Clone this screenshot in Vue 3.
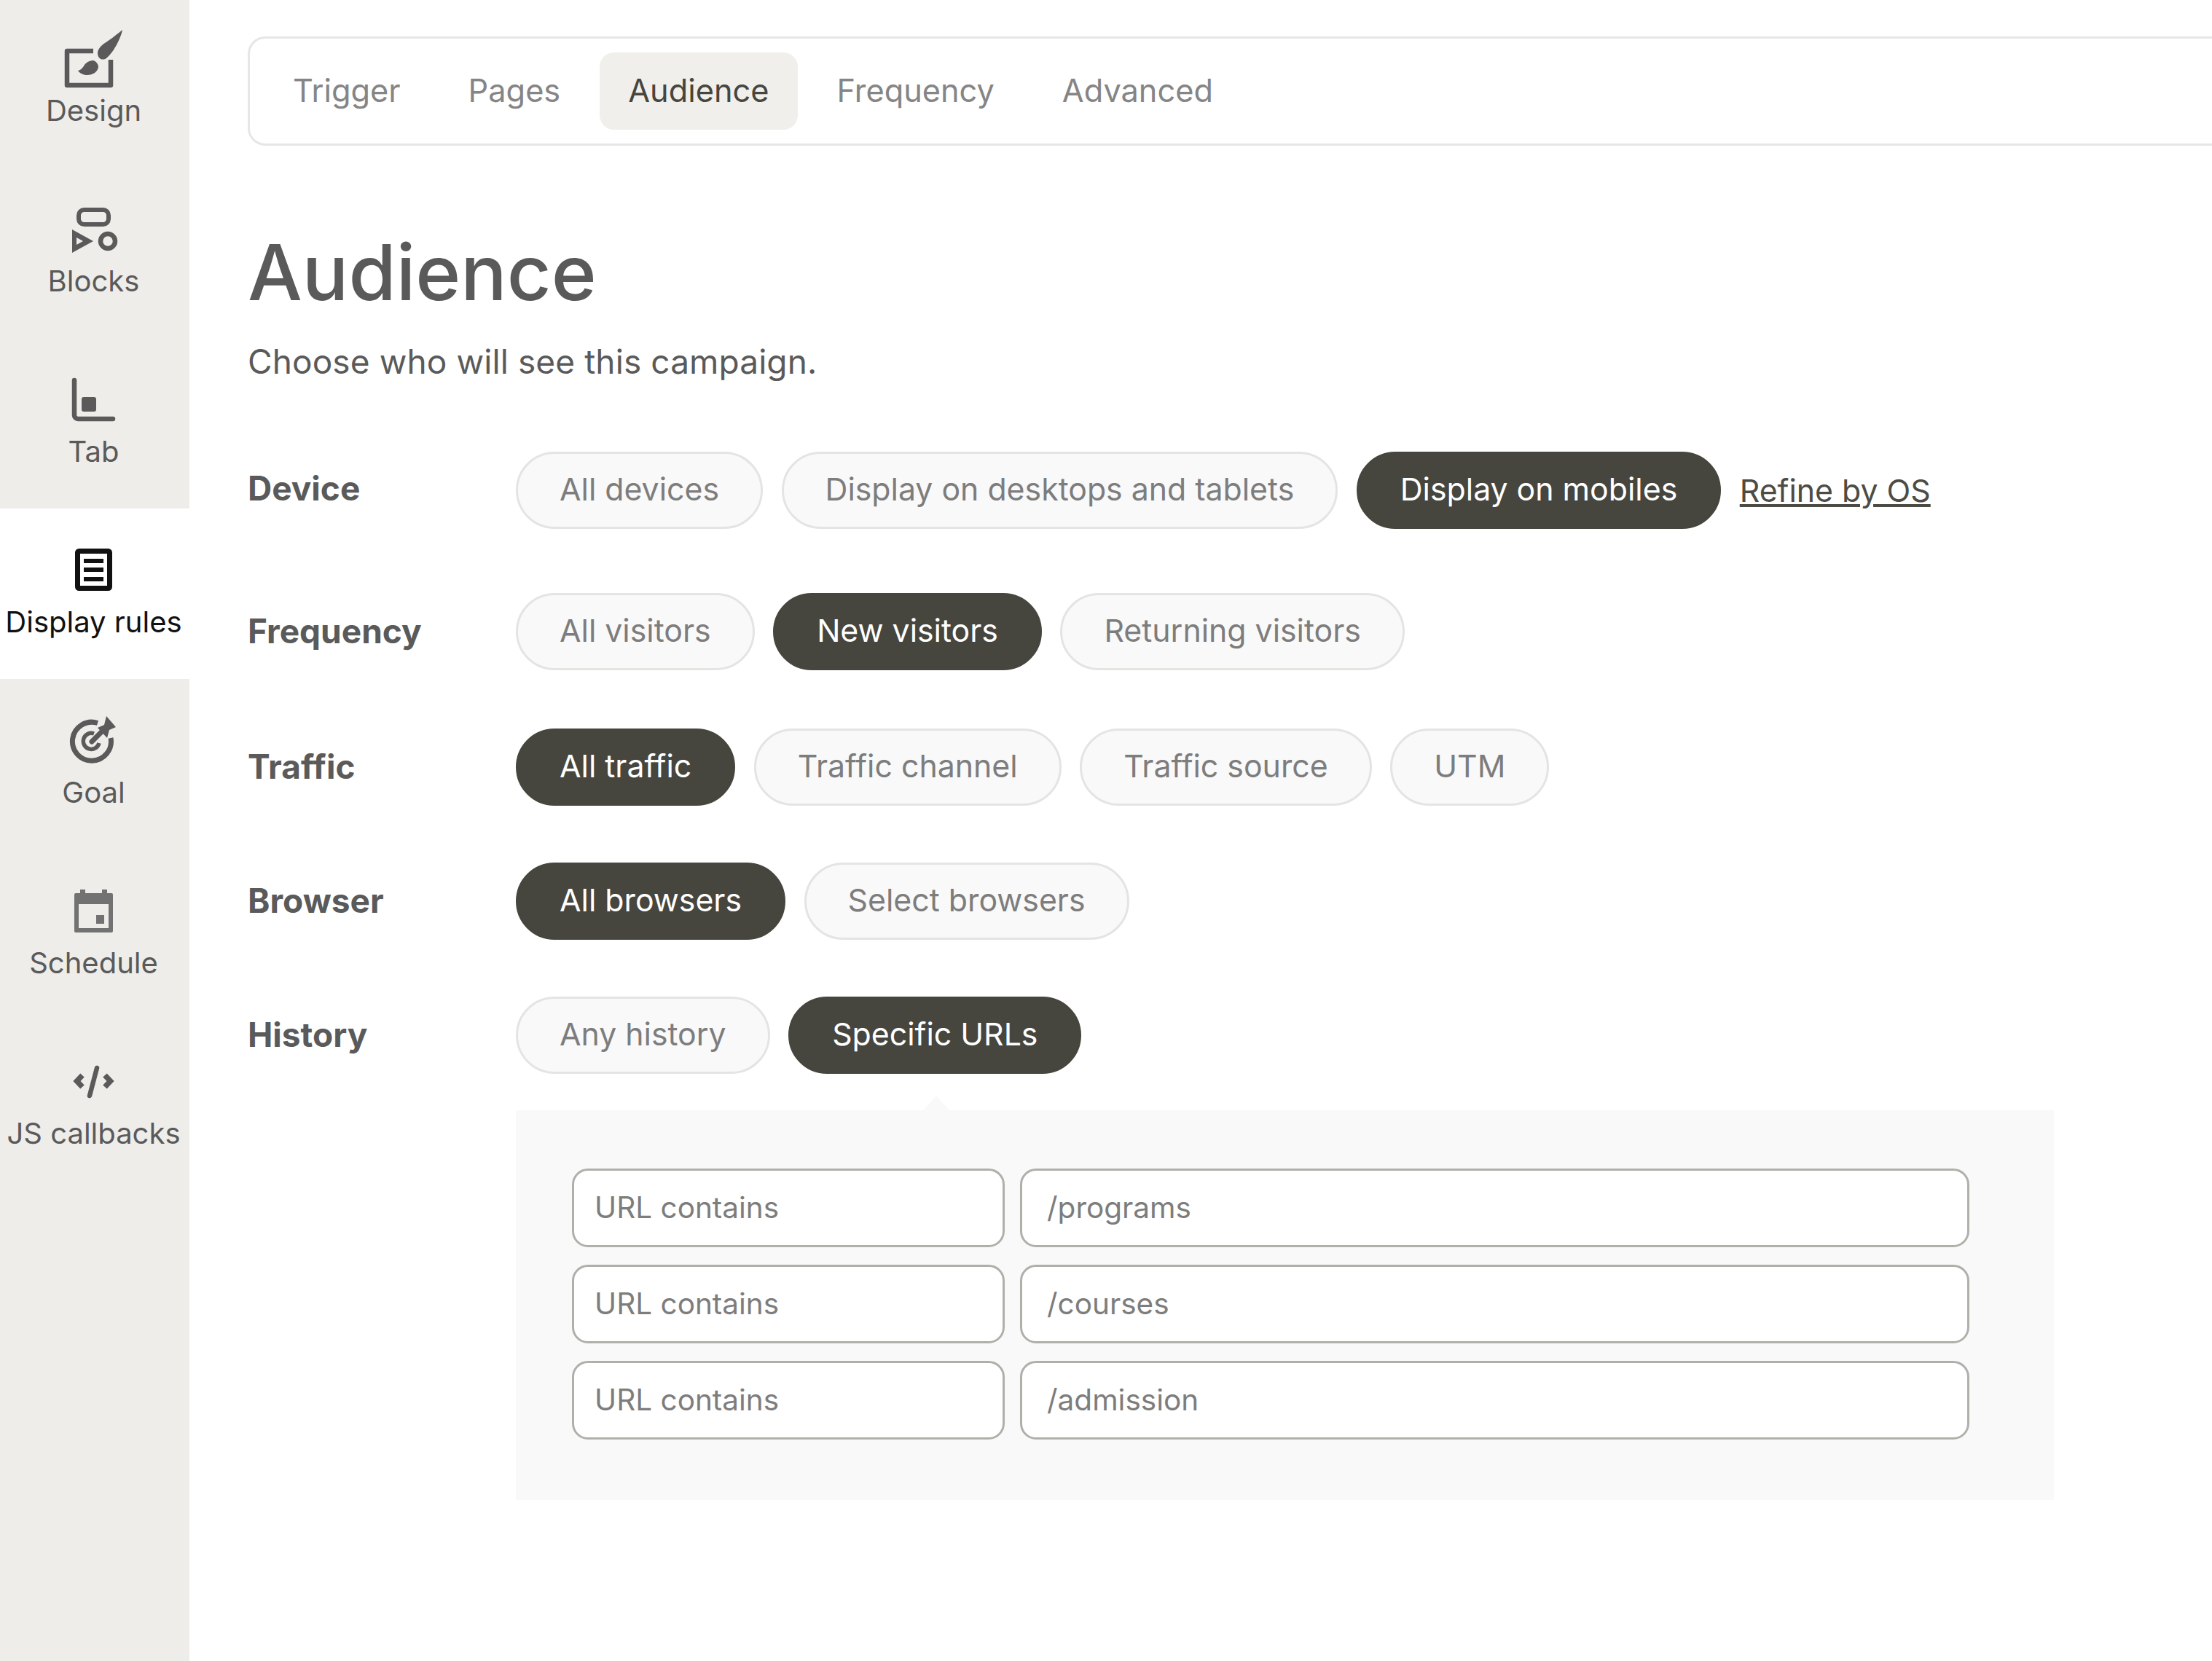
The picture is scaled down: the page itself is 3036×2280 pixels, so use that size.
<template>
	<div class="page">
		<aside class="sidebar">
			<a class="nav-item first">
				<svg viewBox="0 0 96 96" width="96" height="96" fill="none">
					<path d="M46 40H10V87H70V52" stroke="currentColor" stroke-width="6.5" stroke-linejoin="round" />
					<path d="M86 11C84 22 74 42 64 50C58 54 52 50 52 43C52 38 56 33 62 29C70 24 80 16 86 11Z" fill="currentColor" />
					<path d="M25 67C30 66 32 62 34 59C37 55 42 53 46 53C50 54 53 58 53 62C52 69 45 73 38 73C33 73 28 71 25 67Z" fill="currentColor" />
				</svg>
				<span>Design</span>
			</a>
			<a class="nav-item">
				<svg viewBox="0 0 96 96" width="96" height="96" fill="none">
					<rect x="26" y="24" width="41" height="20" rx="7.5" stroke="currentColor" stroke-width="6" />
					<path d="M17 51L46 67L17 83ZM23 62V72L32 67Z" fill="currentColor" fill-rule="evenodd" />
					<circle cx="66" cy="67" r="10" stroke="currentColor" stroke-width="6.5" />
				</svg>
				<span>Blocks</span>
			</a>
			<a class="nav-item">
				<svg viewBox="0 0 96 96" width="96" height="96" fill="none">
					<path d="M20 24V72a5 5 0 0 0 5 5H73" stroke="currentColor" stroke-width="6.5" stroke-linecap="round" />
					<rect x="30" y="47" width="20" height="20" rx="3" fill="currentColor" />
				</svg>
				<span>Tab</span>
			</a>
			<a class="nav-item active">
				<svg viewBox="0 0 96 96" width="96" height="96" fill="none">
					<rect x="24.5" y="24.5" width="44" height="51" rx="2" stroke="currentColor" stroke-width="7" />
					<path d="M33 35h27v6H33zM33 47h27v6H33zM33 60h27v6H33z" fill="currentColor" />
				</svg>
				<span>Display rules</span>
			</a>
			<a class="nav-item">
				<svg viewBox="0 0 96 96" width="96" height="96" fill="none">
					<path d="M52 26.500A26.500 26.500 0 1 0 70 47" stroke="currentColor" stroke-width="7" />
					<path d="M47 41A11 11 0 1 0 54 54" stroke="currentColor" stroke-width="5.500" />
					<path d="M44 52L60 36" stroke="currentColor" stroke-width="7" stroke-linecap="round" />
					<path d="M64 17L77 32L68 36L65 47L52 33L61 29Z" fill="currentColor" />
				</svg>
				<span>Goal</span>
			</a>
			<a class="nav-item">
				<svg class="calendar" viewBox="0 0 96 96" width="96" height="96" fill="none">
					<path d="M28 21h7v5h23v-5h7v5h6a2 2 0 0 1 2 2v50a2 2 0 0 1-2 2H22a2 2 0 0 1-2-2V28a2 2 0 0 1 2-2h6ZM26 41V74H67V41Z" fill="currentColor" fill-rule="evenodd" />
					<rect x="50" y="56" width="11" height="12" fill="currentColor" />
				</svg>
				<span>Schedule</span>
			</a>
			<a class="nav-item">
				<svg viewBox="0 0 96 96" width="96" height="96" fill="none">
					<path d="M31 42L23.500 50L31 58M62 42L69.500 50L62 58" stroke="currentColor" stroke-width="7.500" />
					<path d="M51 32L41 70" stroke="currentColor" stroke-width="6.500" stroke-linecap="round" />
				</svg>
				<span>JS callbacks</span>
			</a>
		</aside>

		<main class="content">
			<nav class="tabs">
				<a v-for="tab in tabs" :key="tab" class="tab" :class="{ active: tab === 'Audience' }">{{ tab }}</a>
			</nav>

			<h1 class="title">Audience</h1>
			<p class="subtitle">Choose who will see this campaign.</p>

			<div v-for="row in rows" :key="row.label" class="row" :class="row.cls">
				<div class="row-label">{{ row.label }}</div>
				<div class="pills">
					<button
						v-for="pill in row.pills"
						:key="pill"
						class="pill"
						:class="{ selected: pill === row.selected }"
					>
						{{ pill }}
					</button>
					<a v-if="row.link" class="link">{{ row.link }}</a>
				</div>
			</div>

			<section class="urls">
				<div v-for="url in urls" :key="url" class="url-row">
					<div class="field field-rule">URL contains</div>
					<div class="field field-value">{{ url }}</div>
				</div>
			</section>
		</main>
	</div>
</template>

<script setup>
const tabs = ['Trigger', 'Pages', 'Audience', 'Frequency', 'Advanced']

const rows = [
	{
		label: 'Device',
		cls: 'row-device',
		pills: ['All devices', 'Display on desktops and tablets', 'Display on mobiles'],
		selected: 'Display on mobiles',
		link: 'Refine by OS'
	},
	{
		label: 'Frequency',
		cls: 'row-frequency',
		pills: ['All visitors', 'New visitors', 'Returning visitors'],
		selected: 'New visitors'
	},
	{
		label: 'Traffic',
		pills: ['All traffic', 'Traffic channel', 'Traffic source', 'UTM'],
		selected: 'All traffic'
	},
	{
		label: 'Browser',
		pills: ['All browsers', 'Select browsers'],
		selected: 'All browsers'
	},
	{
		label: 'History',
		pills: ['Any history', 'Specific URLs'],
		selected: 'Specific URLs'
	}
]

const urls = ['/programs', '/courses', '/admission']
</script>

<style>
html,
body {
	margin: 0;
	background: #fff;
	overflow: hidden;
}
</style>

<style scoped>
.page {
	display: flex;
	width: 3036px;
	height: 2280px;
	overflow: hidden;
	font-family: Inter, 'Liberation Sans', sans-serif;
	color: #5a5a5a;
}

.sidebar {
	flex: none;
	width: 260px;
	background: #eeedea;
}

.nav-item {
	display: flex;
	flex-direction: column;
	align-items: center;
	box-sizing: border-box;
	height: 234px;
	padding-top: 34px;
	font-size: 40px;
	line-height: 48px;
	white-space: nowrap;

	&.first {
		height: 230px;
		padding-top: 30px;
	}

	&.active {
		background: #fff;
		color: #111;
	}

	svg {
		flex: none;
	}

	span {
		margin: 2px 3px 0 0;
	}

	.calendar {
		color: #727272;
	}
}

.content {
	flex: none;
	width: 2776px;
	padding: 50px 0 0 80px;
	box-sizing: border-box;
}

.tabs {
	display: flex;
	align-items: center;
	gap: 15px;
	box-sizing: border-box;
	width: 2800px;
	height: 150px;
	padding-left: 20px;
	border: 3px solid #e6e6e4;
	border-radius: 24px;
}

.tab {
	padding: 0 39px;
	height: 106px;
	line-height: 104px;
	border-radius: 20px;
	font-size: 43.3px;
	color: #858585;

	&.active {
		background: #f0efec;
		color: #46463e;
	}
}

.title {
	margin: 110px 0 0;
	font-size: 105.6px;
	line-height: 128px;
	font-weight: 450;
	color: #5a5a5a;
}

.subtitle {
	margin: 30px 0 0;
	font-size: 46px;
	line-height: 56px;
	letter-spacing: 0.1px;
}

.row {
	display: flex;
	align-items: center;
	margin-bottom: 78px;
}

.row-device {
	margin-top: 96px;
	margin-bottom: 88px;

	.row-label {
		padding-bottom: 7px;
	}
}

.row-frequency {
	margin-bottom: 80px;
}

.row-label {
	flex: none;
	width: 368px;
	padding-bottom: 3px;
	font-size: 46px;
	font-weight: 700;
}

.pills {
	display: flex;
	align-items: center;
	gap: 25.5px;
}

.pill {
	box-sizing: border-box;
	height: 106px;
	padding: 0 57px 3px;
	border: 3px solid #e4e4e2;
	border-radius: 53px;
	background: #f9f9f9;
	font: inherit;
	font-size: 42.8px;
	color: #7d7d7d;

	&.selected {
		background: #46463e;
		border-color: #46463e;
		color: #fff;
	}
}

.link {
	font-size: 42.8px;
	color: #4c4c44;
	text-decoration: underline;
}

.urls {
	position: relative;
	box-sizing: border-box;
	width: 2111px;
	margin: -28px 0 0 368px;
	padding: 80px 116px 83px 77px;
	background: #f9f9f9;
	display: flex;
	flex-direction: column;
	gap: 24px;

	&::before {
		content: '';
		position: absolute;
		top: -20px;
		left: 559px;
		border: solid transparent;
		border-width: 0 18px 20px;
		border-bottom-color: #f9f9f9;
	}
}

.url-row {
	display: flex;
	gap: 21px;
}

.field {
	box-sizing: border-box;
	height: 108px;
	line-height: 102px;
	border: 3px solid #b0b0aa;
	border-radius: 22px;
	background: #fff;
	font-size: 40.5px;
	color: #7d7d7d;
}

.field-rule {
	flex: none;
	width: 594px;
	padding-left: 28px;
}

.field-value {
	flex: 1;
	padding-left: 34px;
}
</style>
